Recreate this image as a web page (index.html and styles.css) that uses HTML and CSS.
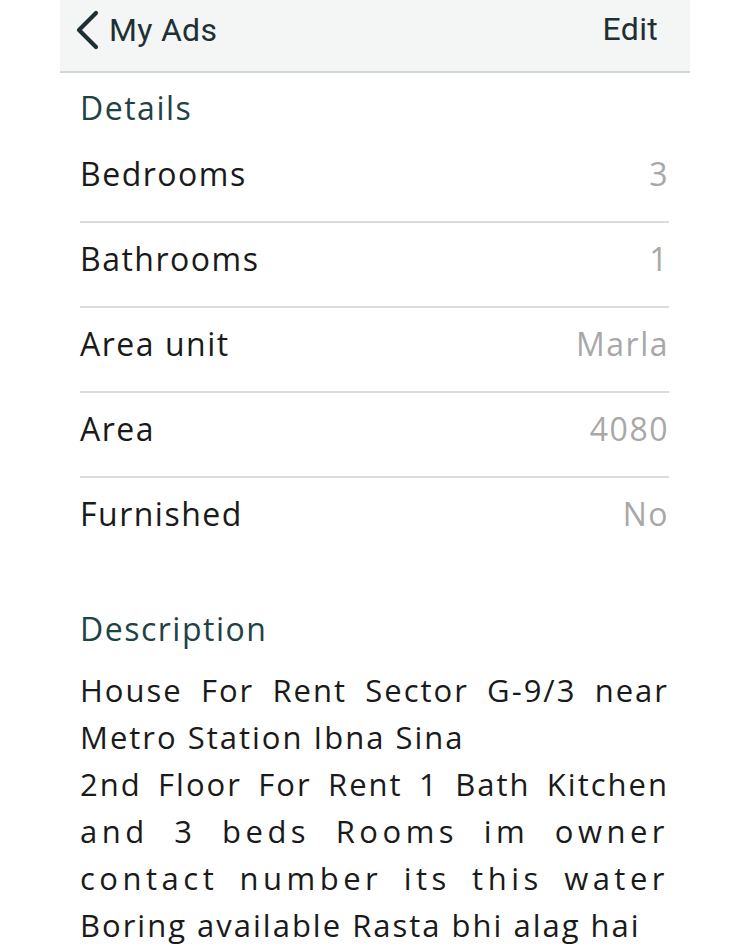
FILE: index.html
```html
<html>
  <head>
    <title>My Ads</title>
    <meta content="text/html;charset=utf-8" http-equiv="Content-Type">
    <link rel="stylesheet" href="styles.css">
  </head>
  <body>
    <div class="screen">
      <div class="topbar">
        <a class="back" href="#">
          <svg class="chevron" width="24" height="40" viewBox="0 0 24 40">
            <polyline points="21,3 4,20 21,37" fill="none" stroke="currentColor" stroke-width="4.2" stroke-linecap="round" stroke-linejoin="round" />
          </svg>
          <span>My Ads</span>
        </a>
        <a class="edit" href="#">Edit</a>
      </div>

      <div class="content">
        <h3 class="section">Details</h3>
        <div class="details">
          <div class="row"><span class="label">Bedrooms</span><span class="value">3</span></div>
          <div class="row"><span class="label">Bathrooms</span><span class="value">1</span></div>
          <div class="row"><span class="label">Area unit</span><span class="value">Marla</span></div>
          <div class="row"><span class="label">Area</span><span class="value">4080</span></div>
          <div class="row"><span class="label">Furnished</span><span class="value">No</span></div>
        </div>

        <h3 class="section desc-title">Description</h3>
        <div class="description">
          <span class="line">House For Rent Sector G-9/3 near</span>
          <span class="line last">Metro Station Ibna Sina</span>
          <span class="line">2nd Floor For Rent 1 Bath Kitchen</span>
          <span class="line spread">and 3 beds Rooms im owner</span>
          <span class="line spread">contact number its this water</span>
          <span class="line last">Boring available Rasta bhi alag hai</span>
        </div>
      </div>
    </div>
  </body>
</html>
```

FILE: styles.css
```css
body {
  margin: 0;
  background-color: #fff;
  font-family: "Open Sans", "Noto Sans", sans-serif;
}
.screen {
  width: 630px;
  margin: 0 auto;
}
.topbar {
  height: 73px;
  box-sizing: border-box;
  display: flex;
  align-items: flex-start;
  justify-content: space-between;
  padding: 10px 32px 0 15px;
  background-color: #f4f6f6;
  border-bottom: 2px solid #d4d6d6;
  font-family: Roboto, "Liberation Sans", sans-serif;
  font-size: 32px;
  line-height: 38px;
  letter-spacing: 0.3px;
}
.topbar a {
  color: #1f3035;
  text-decoration: none;
}
.topbar .back {
  display: flex;
  align-items: center;
  gap: 10px;
}
.content {
  padding: 0 21px 0 20px;
}
.section {
  margin: 0;
  padding: 14px 0 0;
  font-size: 32px;
  font-weight: normal;
  line-height: 42px;
  letter-spacing: 1.5px;
  color: #1f4247;
}
.details {
  margin-top: 9px;
}
.details .row {
  height: 83px;
  display: flex;
  align-items: center;
  justify-content: space-between;
  border-bottom: 2px solid #dcdcdc;
  font-size: 32px;
  letter-spacing: 1.5px;
}
.row span {
  margin-bottom: 13px;
}
.details .row:last-child {
  border-bottom: 0;
}
.row .label {
  color: #1a1a1a;
}
.row .value {
  color: #a8a8a8;
}
.desc-title {
  padding-top: 47px;
}
.description {
  padding-top: 17px;
  font-size: 31px;
  line-height: 47px;
  letter-spacing: 2px;
  color: #1a1a1a;
}
.description .line {
  display: block;
  text-align: justify;
  text-align-last: justify;
}
.description .last {
  text-align-last: left;
}
.description .spread {
  letter-spacing: 4.5px;
}
```
